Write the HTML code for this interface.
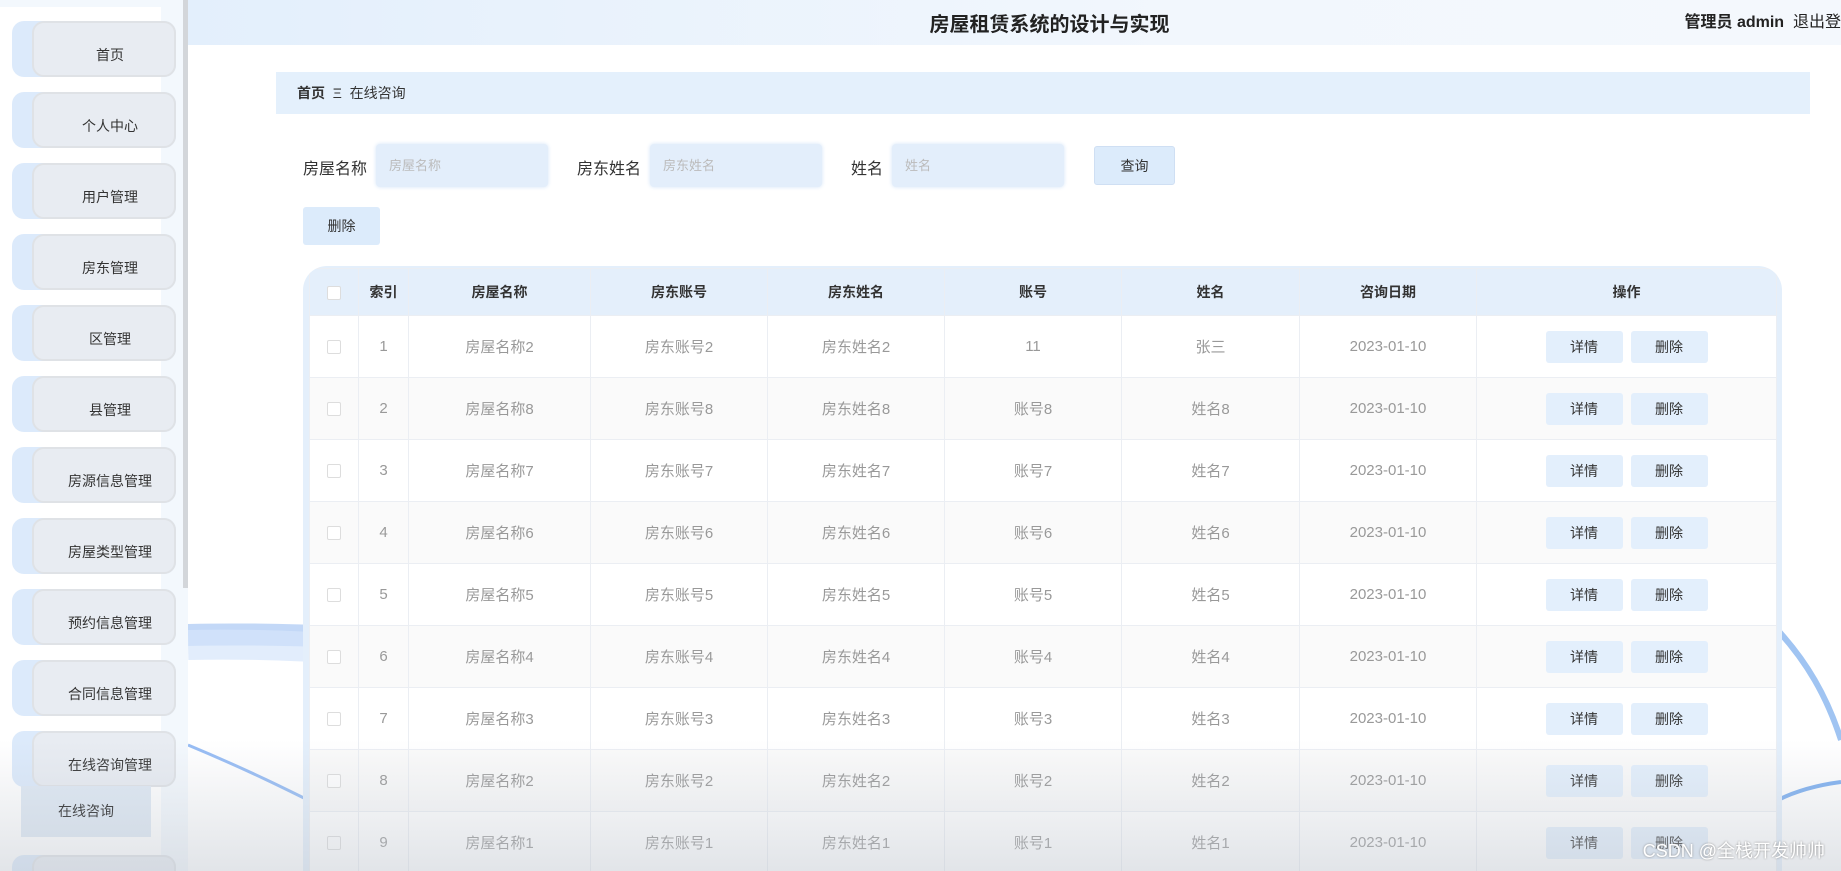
<!DOCTYPE html>
<html><head><meta charset="utf-8">
<style>
*{box-sizing:border-box;margin:0;padding:0}
html{width:1841px;height:871px;overflow:hidden}
body{width:1841px;height:871px;overflow:hidden;position:relative;background:#fff;font-family:"Liberation Sans","Noto Sans CJK SC",sans-serif;color:#333}
.bg{position:absolute;left:188px;top:0;width:1653px;height:871px}
.header{position:absolute;left:188px;top:0;width:1653px;height:45px;background:linear-gradient(90deg,#e3effc,#f2f7fd 60%,#f4f8fd)}
.title{position:absolute;left:0;top:8px;width:100%;text-align:center;font-size:20px;font-weight:bold;color:#222;margin-left:35px}
.user{position:absolute;right:0;top:8px;font-size:16px;color:#222;white-space:nowrap}
.side{position:absolute;left:0;top:0;width:188px;height:871px;background:#f3f8fd;overflow:hidden}
.sidepanel{position:absolute;left:0;top:7px;width:161px;height:864px;background:#fff}
.sbar{position:absolute;left:183px;top:0;width:6px;height:588px;background:#d3d6da}
.item{position:absolute;left:12px;width:164px;height:56px;background:#dceafb;border-radius:12px}
.item .in{position:absolute;left:20px;top:0;right:0;bottom:0;background:#e8ecf2;border:2px solid #dfe2e6;border-radius:12px;font-size:14px;color:#333;text-align:center;padding-top:22px;padding-left:12px}
.sub{position:absolute;left:21px;top:786px;width:130px;height:51px;background:#dfe9f4;font-size:14px;text-align:center;line-height:51px;color:#222}
.crumb{position:absolute;left:276px;top:72px;width:1534px;height:42px;background:#e4f0fc;font-size:14px;line-height:42px;padding-left:21px;color:#333}
.lbl{position:absolute;top:155px;font-size:16px;color:#333}
.inp{position:absolute;top:144px;height:43px;width:172px;background:#e3eefb;border-radius:4px;box-shadow:0 0 4px #d3e3f7;font-size:13px;color:#bbb;line-height:43px;padding-left:13px}
.btn{position:absolute;background:#dcebfb;border-radius:3px;font-size:14px;color:#333;text-align:center}
.tablewrap{position:absolute;left:303px;top:266px;width:1479px;height:605px;background:#e4effb;border-radius:24px 24px 0 0;overflow:hidden}
table{position:absolute;left:6px;top:2px;border-collapse:collapse;table-layout:fixed;width:1467px}
td,th{border:1px solid #ebeef3;text-align:center;font-size:15px;height:62px;color:#999;font-weight:normal}
th{height:47px;background:#e4effb;color:#333;font-weight:bold;font-size:14px}
tr:nth-child(odd) td{background:#fafafa}
tr:nth-child(even) td{background:#fff}
.cb{display:inline-block;width:14px;height:14px;border:1px solid #ddd;background:#fff;border-radius:2px;vertical-align:middle}
.ob{display:inline-block;width:77px;height:32px;line-height:32px;background:#e3effc;border-radius:3px;color:#333;font-size:14px;margin:0 4px}
.fade{position:absolute;left:0;top:740px;width:1841px;height:131px;background:linear-gradient(180deg,rgba(210,214,220,0),rgba(190,196,205,0.45))}
.wm{position:absolute;right:16px;top:837px;font-size:18px;color:#fff;text-shadow:0 0 2px #888}
</style></head><body>
<svg class="bg" viewBox="0 0 1653 871">
<path d="M0 635 C200 630 500 660 700 700" stroke="#a9c8f4" stroke-width="22" fill="none" opacity=".7"/>
<path d="M0 645 C200 640 500 680 800 760" stroke="#d6e6fb" stroke-width="30" fill="none" opacity=".7"/>
<path d="M0 745 C60 770 100 790 140 810" stroke="#6aa0ef" stroke-width="3" fill="none" opacity=".7"/>
<path d="M1580 620 C1620 660 1640 700 1653 740" stroke="#a0c4f2" stroke-width="6" fill="none"/>
<path d="M1590 800 C1610 790 1630 785 1653 782" stroke="#7fb0f0" stroke-width="4" fill="none"/>
</svg>
<div class="header"><div class="title">房屋租赁系统的设计与实现</div><div class="user"><b>管理员 admin</b>&nbsp;&nbsp;退出登</div></div>
<div class="side"><div class="sidepanel"></div><div class="sbar"></div>
<div class="item" style="top:21px"><div class="in">首页</div></div>
<div class="item" style="top:92px"><div class="in">个人中心</div></div>
<div class="item" style="top:163px"><div class="in">用户管理</div></div>
<div class="item" style="top:234px"><div class="in">房东管理</div></div>
<div class="item" style="top:305px"><div class="in">区管理</div></div>
<div class="item" style="top:376px"><div class="in">县管理</div></div>
<div class="item" style="top:447px"><div class="in">房源信息管理</div></div>
<div class="item" style="top:518px"><div class="in">房屋类型管理</div></div>
<div class="item" style="top:589px"><div class="in">预约信息管理</div></div>
<div class="item" style="top:660px"><div class="in">合同信息管理</div></div>
<div class="item" style="top:731px"><div class="in">在线咨询管理</div></div>
<div class="sub">在线咨询</div>
<div class="item" style="top:855px;height:16px;border-radius:12px 12px 0 0"><div class="in" style="border-bottom:none;border-radius:12px 12px 0 0"></div></div>
</div>
<div class="crumb"><b>首页</b>&nbsp;&nbsp;Ξ&nbsp;&nbsp;在线咨询</div>
<div class="lbl" style="left:303px">房屋名称</div><div class="inp" style="left:376px">房屋名称</div>
<div class="lbl" style="left:577px">房东姓名</div><div class="inp" style="left:650px">房东姓名</div>
<div class="lbl" style="left:851px">姓名</div><div class="inp" style="left:892px">姓名</div>
<div class="btn" style="left:1094px;top:146px;width:81px;height:39px;line-height:39px;border:1px solid #cfdff3">查询</div>
<div class="btn" style="left:303px;top:207px;width:77px;height:38px;line-height:38px">删除</div>
<div class="tablewrap">
<table>
<colgroup><col style="width:49px"><col style="width:50px"><col style="width:182px"><col style="width:177px"><col style="width:177px"><col style="width:177px"><col style="width:178px"><col style="width:177px"><col style="width:300px"></colgroup>
<tr><th><span class="cb"></span></th><th>索引</th><th>房屋名称</th><th>房东账号</th><th>房东姓名</th><th>账号</th><th>姓名</th><th>咨询日期</th><th>操作</th></tr>
<tr><td><span class="cb"></span></td><td>1</td><td>房屋名称2</td><td>房东账号2</td><td>房东姓名2</td><td>11</td><td>张三</td><td>2023-01-10</td><td><span class="ob">详情</span><span class="ob">删除</span></td></tr>
<tr><td><span class="cb"></span></td><td>2</td><td>房屋名称8</td><td>房东账号8</td><td>房东姓名8</td><td>账号8</td><td>姓名8</td><td>2023-01-10</td><td><span class="ob">详情</span><span class="ob">删除</span></td></tr>
<tr><td><span class="cb"></span></td><td>3</td><td>房屋名称7</td><td>房东账号7</td><td>房东姓名7</td><td>账号7</td><td>姓名7</td><td>2023-01-10</td><td><span class="ob">详情</span><span class="ob">删除</span></td></tr>
<tr><td><span class="cb"></span></td><td>4</td><td>房屋名称6</td><td>房东账号6</td><td>房东姓名6</td><td>账号6</td><td>姓名6</td><td>2023-01-10</td><td><span class="ob">详情</span><span class="ob">删除</span></td></tr>
<tr><td><span class="cb"></span></td><td>5</td><td>房屋名称5</td><td>房东账号5</td><td>房东姓名5</td><td>账号5</td><td>姓名5</td><td>2023-01-10</td><td><span class="ob">详情</span><span class="ob">删除</span></td></tr>
<tr><td><span class="cb"></span></td><td>6</td><td>房屋名称4</td><td>房东账号4</td><td>房东姓名4</td><td>账号4</td><td>姓名4</td><td>2023-01-10</td><td><span class="ob">详情</span><span class="ob">删除</span></td></tr>
<tr><td><span class="cb"></span></td><td>7</td><td>房屋名称3</td><td>房东账号3</td><td>房东姓名3</td><td>账号3</td><td>姓名3</td><td>2023-01-10</td><td><span class="ob">详情</span><span class="ob">删除</span></td></tr>
<tr><td><span class="cb"></span></td><td>8</td><td>房屋名称2</td><td>房东账号2</td><td>房东姓名2</td><td>账号2</td><td>姓名2</td><td>2023-01-10</td><td><span class="ob">详情</span><span class="ob">删除</span></td></tr>
<tr><td><span class="cb"></span></td><td>9</td><td>房屋名称1</td><td>房东账号1</td><td>房东姓名1</td><td>账号1</td><td>姓名1</td><td>2023-01-10</td><td><span class="ob">详情</span><span class="ob">删除</span></td></tr>
</table>
</div>
<div class="fade"></div>
<div class="wm">CSDN @全栈开发帅帅</div>
</body></html>
